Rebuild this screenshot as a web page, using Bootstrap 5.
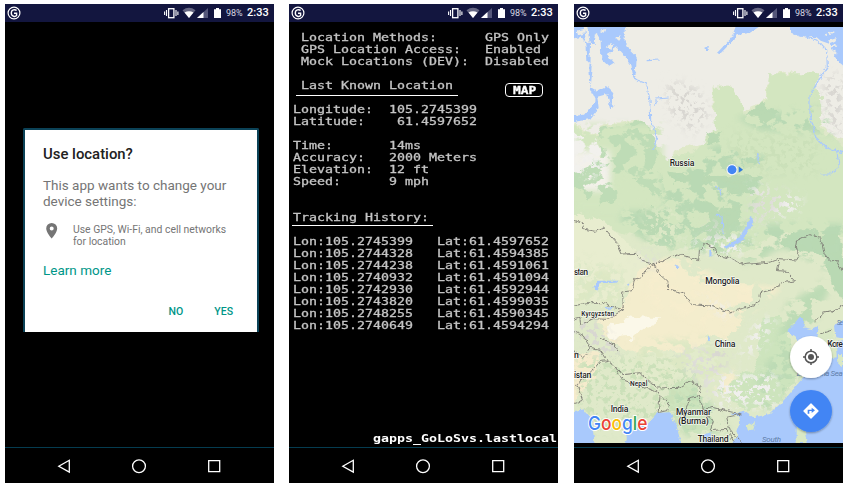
<!DOCTYPE html>
<html lang="en">
<head>
<meta charset="utf-8">
<title>Location screens</title>
<link href="https://cdn.jsdelivr.net/npm/bootstrap@5.3.0/dist/css/bootstrap.min.css" rel="stylesheet">
<style>
body{font-family:Roboto,sans-serif;width:850px;height:487px;overflow:hidden;background:#fff}
.stage{padding:4px 7px 4px 5px;height:487px}
.phone{width:269px;height:479px;background:#000;color:#fff}
.phone-mid{margin-left:15px}
.phone-end{margin-left:16px}
.statusbar{height:18px;background:#13163f;padding:0 6px 0 2px}
.statusbar svg,.navkeys svg{display:block}
.pct{font-size:9px;width:25px;padding-left:4px;line-height:18px;color:#d8d8e2}
.clock{font-size:11px;font-weight:500;width:21px;line-height:18px}
.statusbar span{white-space:nowrap}
.navkeys{height:36px;border-top:1px solid #053c50}
.dialog-box{width:236px;height:204px;margin:106px 0 0 18px;border:2px solid #0b4257;border-bottom:0;background:#fff;padding:15px 0 0 18px;color:#757575;border-radius:2px 2px 0 0}
.dialog-title{font-size:14.9px;line-height:18px;font-weight:500;color:#212121;margin-bottom:14px}
.dialog-copy{font-size:13.5px;line-height:16px;margin-bottom:15px}
.dialog-item{font-size:10.4px;line-height:12px;margin-bottom:14px}
.pin{margin:-2px 13px 0 1px}
.teal{color:#009688}
.learn{font-size:13.5px;line-height:16px;margin-bottom:28px}
.answers{font-size:10.5px;line-height:12px;font-weight:500;padding-right:24px;gap:31px}
.term{font-family:"DejaVu Sans Mono",monospace;font-size:10.6px;line-height:12px;color:#c4c4c4;padding:9px 0 0 4px}
.term div{height:12px}
.term span,.wide{display:inline-block;white-space:pre;transform:scaleX(1.254);transform-origin:0 0;-webkit-text-stroke:.3px currentColor}
.term .rule-a{height:17px;width:162px;margin:0 0 7px 3px;padding-left:5px;border-bottom:1px solid #fff}
.term .rule-b{height:15px;width:141px;margin:0 0 9px -1px;padding-left:1px;border-bottom:1px solid #fff}
.term .headrow{height:24px}
.mapbtn{width:38px;height:14px;border:1px solid #fff;border-radius:4px;margin:4px 15px 0 0;padding:0 0 0 7px;background:#000;color:#fff;font:bold 10.3px/12px "DejaVu Sans Mono",monospace;text-align:left}
.service{font-family:"DejaVu Sans Mono",monospace;font-weight:bold;font-size:10.6px;line-height:12px;height:15px;padding-left:84px}
.service .wide{-webkit-text-stroke:0}
.map{margin-top:5px;height:416px;margin-bottom:4px}
.map svg{display:block}
.lbl{font-family:Roboto,sans-serif;font-weight:500;font-size:26px;fill:#222;stroke:#fff;stroke-opacity:.75;stroke-width:4px;paint-order:stroke;stroke-linejoin:round}
.sea{font-family:Roboto,sans-serif;font-style:italic;font-size:24px;fill:#607da8}
.logo{font-family:Inter,sans-serif;font-weight:500;font-size:57px;stroke:#fff;stroke-width:6px;paint-order:stroke;stroke-linejoin:round}
</style>
<script src="https://cdn.jsdelivr.net/npm/bootstrap@5.3.0/dist/js/bootstrap.bundle.min.js"></script>
</head>
<body>
<svg width="0" height="0" class="position-absolute">
 <symbol id="gmark" viewBox="0 0 14 18"><circle cx="7" cy="9" r="5.9" fill="none" stroke="#fff" stroke-width="1.200"/><path d="M9.6 6.6C8.3 5.200 4.300 5.300 4.300 9s4 4 5.300 2.600V9.300H7" fill="none" stroke="#fff" stroke-width="1.400"/></symbol>
 <symbol id="sysicons" viewBox="164 0 58 18"><g fill="none" stroke="#fff"><rect x="168.600" y="4.700" width="5.300" height="9" stroke-width="1.300"/><path d="M166.500 6v6M176 6v6M164.600 7.500v3.500M177.900 7.500v3.500" stroke-width="1.100"/></g><path d="M182.500 6.200q6.500-4.700 13 0L189 14z" fill="#666783"/><path d="M184.500 8.500q4.500-2.600 9 0L189 14z" fill="#fff"/><path d="M208 4v10h-11z" fill="#55577a"/><path d="M203.500 8.100V14H197z" fill="#fff"/><path d="M214 5.200h2V4h3v1.200h2V14h-7z" fill="#fff"/></symbol>
 <symbol id="keys" viewBox="0 0 269 35"><g fill="none" stroke="#fff" stroke-width="1.300"><path d="M64.300 12.300v11.800L53.800 18.200z"/><circle cx="134" cy="18.200" r="6.400"/><path d="M203.700 12.700h11v11h-11z"/></g></symbol>
</svg>
<main class="stage d-flex">
 <section class="phone d-flex flex-column">
  <div class="statusbar d-flex align-items-center"><svg class="me-auto" width="14" height="18"><use href="#gmark"/></svg><svg width="58" height="18"><use href="#sysicons"/></svg><span class="pct">98%</span><span class="clock">2:33</span></div>
  <div class="dialog-box">
   <div class="dialog-title">Use location?</div>
   <div class="dialog-copy">This app wants to change your<br>device settings:</div>
   <div class="dialog-item d-flex"><svg class="pin" width="16" height="18" viewBox="0 0 16 18"><path fill="#757575" fill-rule="evenodd" d="M7.700 1a5.500 5.500 0 0 0-5.500 5.500C2.200 10.600 7.700 16.500 7.700 16.500S13.200 10.600 13.200 6.500A5.500 5.500 0 0 0 7.700 1zm0 3.500a2 2 0 1 1 0 4 2 2 0 0 1 0-4z"/></svg><div>Use GPS, Wi-Fi, and cell networks<br>for location</div></div>
   <div class="learn teal">Learn more</div>
   <div class="answers teal d-flex justify-content-end"><span>NO</span><span>YES</span></div>
  </div>
  <div class="navkeys mt-auto"><svg width="269" height="35"><use href="#keys"/></svg></div>
 </section>

 <section class="phone phone-mid d-flex flex-column">
  <div class="statusbar d-flex align-items-center"><svg class="me-auto" width="14" height="18"><use href="#gmark"/></svg><svg width="58" height="18"><use href="#sysicons"/></svg><span class="pct">98%</span><span class="clock">2:33</span></div>
  <div class="term">
   <div><span> Location Methods:      GPS Only</span></div>
   <div><span> GPS Location Access:   Enabled</span></div>
   <div><span> Mock Locations (DEV):  Disabled</span></div>
   <div></div>
   <div class="headrow d-flex justify-content-between"><div class="rule-a"><span>Last Known Location</span></div><button class="mapbtn"><b class="wide">MAP</b></button></div>
   <div><span>Longitude:  105.2745399</span></div>
   <div><span>Latitude:    61.4597652</span></div>
   <div></div>
   <div><span>Time:       14ms</span></div>
   <div><span>Accuracy:   2000 Meters</span></div>
   <div><span>Elevation:  12 ft</span></div>
   <div><span>Speed:      9 mph</span></div>
   <div></div><div></div>
   <div class="rule-b"><span>Tracking History:</span></div>
   <div><span>Lon:105.2745399   Lat:61.4597652</span></div>
   <div><span>Lon:105.2744328   Lat:61.4594385</span></div>
   <div><span>Lon:105.2744238   Lat:61.4591061</span></div>
   <div><span>Lon:105.2740932   Lat:61.4591094</span></div>
   <div><span>Lon:105.2742930   Lat:61.4592944</span></div>
   <div><span>Lon:105.2743820   Lat:61.4599035</span></div>
   <div><span>Lon:105.2748255   Lat:61.4590345</span></div>
   <div><span>Lon:105.2740649   Lat:61.4594294</span></div>
  </div>
  <div class="service mt-auto"><span class="wide">gapps_GoLoSvs.lastlocal</span></div>
  <div class="navkeys"><svg width="269" height="35"><use href="#keys"/></svg></div>
 </section>

 <section class="phone phone-end d-flex flex-column">
  <div class="statusbar d-flex align-items-center"><svg class="me-auto" width="14" height="18"><use href="#gmark"/></svg><svg width="58" height="18"><use href="#sysicons"/></svg><span class="pct">98%</span><span class="clock">2:33</span></div>
  <div class="map">
  <svg width="269" height="416" viewBox="12 9 807 1248">
   <defs>
    <filter id="rough" filterUnits="userSpaceOnUse" x="-30" y="-30" width="900" height="1320"><feTurbulence type="fractalNoise" baseFrequency=".035" numOctaves="4" seed="4" result="n"/><feDisplacementMap in="SourceGraphic" in2="n" scale="50" xChannelSelector="R" yChannelSelector="G" color-interpolation-filters="sRGB"/></filter>
    <filter id="wobble" filterUnits="userSpaceOnUse" x="-30" y="-30" width="900" height="1320" color-interpolation-filters="sRGB"><feTurbulence type="fractalNoise" baseFrequency=".07" numOctaves="3" seed="9" result="n"/><feDisplacementMap in="SourceGraphic" in2="n" scale="14" xChannelSelector="R" yChannelSelector="G"/></filter>
    <filter id="speck" color-interpolation-filters="sRGB" filterUnits="userSpaceOnUse" x="0" y="0" width="840" height="1270"><feTurbulence type="fractalNoise" baseFrequency=".022 .03" numOctaves="5" seed="12"/><feColorMatrix values="0 0 0 0 0 0 0 0 0 0 0 0 0 0 0 14 0 0 0 -6.900" result="m"/><feGaussianBlur in="SourceGraphic" stdDeviation="10"/><feComposite in2="m" operator="in"/></filter>
    <filter id="fine" color-interpolation-filters="sRGB" filterUnits="userSpaceOnUse" x="0" y="0" width="840" height="1270"><feTurbulence type="fractalNoise" baseFrequency=".06" numOctaves="4" seed="31"/><feColorMatrix values="0 0 0 0 0 0 0 0 0 0 0 0 0 0 0 0 10 0 0 -5.200" result="m"/><feGaussianBlur in="SourceGraphic" stdDeviation="14"/><feComposite in2="m" operator="in"/></filter>
    <filter id="drop" x="-20%" y="-20%" width="140%" height="150%"><feDropShadow dx="0" dy="3" stdDeviation="3" flood-opacity=".35"/></filter>
   </defs>
   <rect x="0" y="0" width="840" height="1270" fill="#dfe9c9"/>
   <!-- tundra and forest belts -->
   <g filter="url(#rough)">
    <path fill="#eeede6" d="M-30-30H880V360L800 350 760 300 750 180 640 150 600 190 600 240 530 270 500 200 440 200 440 260 460 310 430 360 370 370 290 420 240 300 130 310 80 340-30 290z"/>
    <path fill="#d3e6c0" d="M440 200L500 200 545 290 600 240 610 160 750 160 770 330 850 390V640L640 640 520 700 300 680 120 620-20 560V300L90 350 240 310 290 410 380 400 450 320z"/>
    <path fill="#bedcb6" d="M90 330L240 300 280 400 250 450 290 470 280 530 230 500 180 450 140 470 150 530 100 560 20 500 20 430 110 410z"/>
    <path fill="#bad9b3" d="M310 455L440 468 570 465 590 470 560 520 480 520 460 485 320 490zM390 540L470 560 530 550 515 620 470 660 430 600zM545 280L580 250 640 280 600 310zM430 340L470 330 455 370 425 380zM200 570L260 560 300 600 260 650 220 620z"/>
    <path fill="#b9d9b3" d="M650 650L720 630 770 640 819 620 850 870 800 800 780 720 740 700 640 670z"/>
    <path fill="#f2f1ed" d="M-20 320L90 360 110 400 60 440-20 480z"/>
    <path fill="#e8edcf" d="M-20 560L120 610 220 700 250 740 170 800 150 850-20 850z"/>
    <path fill="#f4edcd" d="M200 770L260 730 330 720 400 790 560 790 560 840 480 860 530 900 480 960 430 940 400 980 300 1010 200 1010 130 960 90 900 170 870z"/>
    <path fill="#fbf8e9" d="M120 920L190 890 290 895 240 920 200 950 130 955z"/>
    <path fill="#e2ebcb" d="M150 1000L380 990 460 960 460 1080 360 1070 270 1090 160 1060z"/>
    <path fill="#f5ebcc" d="M-20 1000L100 1000 90 1060 20 1150-20 1130z"/>
    <path fill="#cde4bd" d="M590 900L640 880 660 920 700 1060 640 1150 530 1170 460 1110 560 1040zM310 1100L390 1060 400 1160 440 1230 360 1240 300 1150z"/>
   </g>
   <g filter="url(#speck)">
    <path fill="#b9d9b4" d="M240 400L300 450 440 360 600 400 520 620 440 690 250 670 150 590 180 500zM500 280L760 250 790 330 570 320zM580 600H819V760L740 720 640 670 520 720z"/>
    <path fill="#d3e6c0" d="M20 300H280V560H20z"/>
    <path fill="#f3f1ea" d="M10 380H120V500H10z"/>
    <path fill="#f6edcd" d="M250 710L340 700 480 780 640 790 520 880 400 900 230 830zM430 1040L500 1040 500 1110 440 1110z"/>
    <path fill="#bddbb5" d="M650 840L800 750 740 880 690 1060 590 1170 560 1060 620 980zM300 1120L380 1080 480 1220 350 1240zM340 660L560 640 600 710 470 690z"/>
    <path fill="#dde8c4" d="M210 950L450 940 460 1070 190 1060zM10 730L150 740 150 840H10z"/>
   </g>
   <g filter="url(#fine)">
    <path fill="#d8d6d1" d="M290 170L380 190 420 270 370 330 300 270zM760 160L819 150V360L770 290zM10 880L90 900 150 980 130 1010 10 940zM140 1020L350 1070 340 1100 150 1060zM370 980L480 960 460 1050 370 1060z"/>
    <path fill="#f0efed" d="M30 400H110V450H30zM540 480L700 520 680 570 540 600zM330 660L560 620 500 700zM370 810L480 850 480 890zM560 890L620 880 580 970 500 1010zM430 1050H620V1150H430z"/>
    <path fill="#cbe0b9" d="M480 330H740V450H480zM20 1000H380V1220H40z"/>
    <path fill="#deddd8" d="M540 510L650 500 610 580 540 600zM190 690L260 680 250 740zM400 600L450 590 430 660zM310 990L420 970 440 1140 390 1080z"/>
    <path fill="#dbe8c6" d="M220 560L330 540 340 650 240 690zM20 700L170 740 160 830H20z"/>
   </g>
   <!-- seas and rivers -->
   <g fill="#a9c9fc" filter="url(#wobble)">
    <path d="M0 0H40L50 70 52 110 68 130 62 190 80 200 108 186 130 208 122 240 136 250 120 252 112 210 82 218 86 252 60 285 0 296V278L42 272 78 230 62 195 58 135 60 60 30 40 0 45zM50 0H190L164 16V50L178 78 200 100 198 138 190 158 184 122 158 88 142 70 110 90 134 118 118 128 94 106 92 52 78 28 74 60 60 60zM500 0H580L540 26 500 34 488 50 450 90 440 88 484 42zM660 0H840V140L800 110 780 60 752 50 740 40 690 38 660 26zM540 580L548 582 546 606 520 646 474 674 464 668 508 640 526 610zM650 920L672 900 688 880 702 886 700 910 728 916 748 906 736 940 700 960 664 930zM840 870L792 905 796 940 840 945zM740 960L840 949V1280H470L500 1240 510 1180 480 1170 520 1160 550 1180 600 1170 650 1120 700 1060 700 980zM690 930L770 930 760 970 690 980zM0 1165L40 1156 66 1190 76 1280H0zM158 1280L178 1220 230 1200 262 1166 300 1165 320 1210 340 1280zM404 70h12v8h-12zM418 678h8l-2 20h-6zM70 790L84 770 146 770 140 776 90 778 82 800zM108 848l24-2-4 8h-20zM412 938l12 4-4 8zM398 1235L420 1225 440 1280H400zM316 724l12 4-4 8zM170 778l8 2-2 10z"/>
   </g>
   <g fill="none" stroke="#a9c9fc" stroke-width="3.500" filter="url(#wobble)"><path d="M190 155L196 168 230 180 240 230 242 290 260 340 250 380M230 110L270 108M250 250L260 225 296 222M690 35L740 48 770 80 772 130 745 170 720 215 720 270 738 340 770 372 800 380 819 386"/><path d="M800 380L808 430 780 450 754 450M436 490L450 500 454 520M440 570L456 580 460 630M560 390L566 420"/></g>
   <g filter="url(#wobble)"><path fill="#d9e8c5" d="M735 945L760 920 785 910 798 960 800 1000 770 1005 760 960zM680 1210L700 1195 710 1257 680 1257zM530 1205L555 1195 550 1220 535 1220zM804 990H819V1030L805 1025z"/><path fill="#eeede6" d="M20 20L44 14 40 30 24 34zM90 20L110 14 104 26zM136 40L152 34 146 50zM110 70L130 60 124 76zM764 36L770 28 772 40zM776 50L800 42 796 50 778 58zM772 70L796 60 800 68zM780 84L800 80 798 92zM776 20L796 24 780 30z"/></g>
   <!-- borders -->
   <g fill="none" stroke="#7d7c75" stroke-width="2.700" stroke-linejoin="round" filter="url(#wobble)">
    <path d="M6 588L36 596 42 616 76 622 104 612 118 630 140 655 156 690 200 688 220 712 252 722 320 690 360 700 386 710 388 680 406 660 430 672 446 696 480 702 520 722 604 714 630 704 680 708 688 694 676 672 680 650 716 632 752 640 762 688 780 710 800 710 824 750"/>
    <path d="M252 722L230 736 218 760 194 766 186 800 158 804 160 858 110 886 70 884 32 902 30 880 6 886M160 858L130 850 100 836 50 836 6 848M252 722L266 746 294 772 296 796 340 806 368 842 420 846 480 864 530 850 566 836 572 806 610 796 640 776 676 770 650 742 622 740 630 706M734 890L760 868 790 862 824 840M750 930L786 918"/>
    <path d="M6 920L40 936 60 970 90 976 114 1010 132 1028 160 1052 210 1046 262 1092 330 1090 360 1070 390 1090 388 1116 360 1120 340 1176 330 1196M114 1010L90 1012 60 1050 20 1080 38 1130 6 1140M132 1028L160 1068 262 1104 270 1120 264 1166 290 1160 296 1140 270 1110M388 1116L400 1156 430 1150 470 1160 514 1170 470 1180 480 1216 514 1257M400 1160L430 1190 420 1220 470 1216 494 1257M60 970L40 1000 6 980M90 940L130 960 150 985"/>
   </g>
   <!-- place names -->
   <g class="lbl">
    <text x="299" y="427" textLength="74">Russia</text><text x="406" y="779" textLength="102">Mongolia</text><text x="434" y="968" textLength="62">China</text><text x="12" y="753" textLength="42">stan</text><text x="34" y="875" style="font-size:20px" textLength="99">Kyrgyzstan</text><text x="180" y="1087" style="font-size:20px" textLength="52">Nepal</text><text x="12" y="1062" textLength="52">istan</text><text x="12" y="1003">n</text><text x="122" y="1165" textLength="53">India</text><text x="318" y="1174" textLength="105">Myanmar</text><text x="325" y="1200" textLength="91">(Burma)</text><text x="383" y="1254" textLength="93">Thailand</text><text x="772" y="968" textLength="47">Kore</text></g>
   <g class="sea"><text x="800" y="903" style="font-size:20px" textLength="19">Se</text><text x="680" y="1056" textLength="138">East China Sea</text><text x="576" y="1253" textLength="57">South</text></g>
   <text class="logo" x="54" y="1217" textLength="178" lengthAdjust="spacingAndGlyphs"><tspan fill="#4285f4">G</tspan><tspan fill="#ea4335">o</tspan><tspan fill="#fbbc05">o</tspan><tspan fill="#4285f4">g</tspan><tspan fill="#34a853">l</tspan><tspan fill="#ea4335">e</tspan></text>
   <path fill="#2f79dc" d="M506 427L519 437 506 446z"/><circle cx="486" cy="437" r="17" fill="#fff" stroke="#b8c8b0"/><circle cx="486" cy="437" r="13.500" fill="#4285f4"/>
   <circle cx="723" cy="999" r="63" fill="#fff" filter="url(#drop)"/><g fill="none" stroke="#555" stroke-width="4.500"><circle cx="723" cy="999" r="17.500"/><path d="M723 975v9M723 1014v9M699 999h9M738 999h9"/></g><circle cx="723" cy="999" r="9" fill="#555"/>
   <circle cx="723" cy="1161" r="63" fill="#4285f4" filter="url(#drop)"/><path fill="#fff" stroke="#fff" stroke-width="4" stroke-linejoin="round" d="M723 1140L744 1161 723 1182 702 1161z"/><path fill="#4285f4" d="M713 1169v-12h12v-6l10 8-10 8v-6h-7v8z"/>
  </svg>
  </div>
  <div class="navkeys"><svg width="269" height="35"><use href="#keys"/></svg></div>
 </section>
</main>
</body>
</html>
